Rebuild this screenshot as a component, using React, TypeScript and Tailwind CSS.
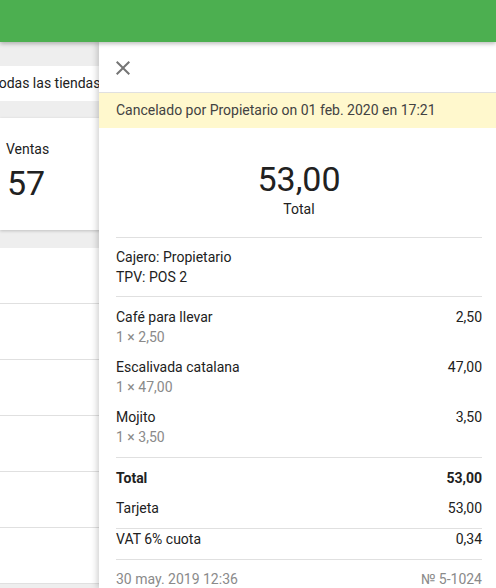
import React from "react";

function Row({ peek }: { peek?: boolean }) {
  return (
    <div className="h-[56px] border-b border-[#e0e0e0] flex items-center">
      {peek ? <span className="ml-[-8px] text-[14px] text-[#212121]">0</span> : null}
    </div>
  );
}

function Line({ left, right, sub, bold }: { left: string; right?: string; sub?: string; bold?: boolean }) {
  return (
    <div>
      <div className={"flex justify-between h-[20px] leading-[20px] text-[14px] " + (bold ? "font-bold text-[#212121]" : "text-[#212121]")}>
        <span>{left}</span>
        {right ? <span>{right}</span> : null}
      </div>
      {sub ? <div className="h-[20px] leading-[20px] text-[14px] text-[#8a8a8a]">{sub}</div> : null}
    </div>
  );
}

export default function App() {
  return (
    <div className="relative w-[496px] h-[588px] overflow-hidden bg-[#eeeeee] font-['Roboto',sans-serif]">
      <div className="relative z-10 h-[42px] bg-[#4caf50] shadow-[0_2px_4px_rgba(0,0,0,0.25)]" />
      <div className="flex flex-col">
        <div className="mt-[24px] h-[35px] bg-white flex items-center">
          <span className="ml-[-9px] text-[14px] text-[#212121] whitespace-nowrap">Todas las tiendas</span>
        </div>
        <div className="mt-[17px] h-[112px] bg-white shadow-[0_1px_3px_rgba(0,0,0,0.2)] pl-[6px] pt-[21px]">
          <div className="text-[14px] leading-[20px] text-[#212121]">Ventas</div>
          <div className="text-[34px] leading-[40px] text-[#212121] mt-[4px] ml-[1px]">57</div>
        </div>
        <div className="mt-[18px] bg-white">
          <Row />
          <Row />
          <Row peek />
          <Row peek />
          <Row peek />
          <Row peek />
        </div>
      </div>

      <div className="absolute left-[99px] top-[42px] right-0 bottom-0 bg-white shadow-[-2px_0_6px_rgba(0,0,0,0.18)] flex flex-col">
        <div className="h-[51px] border-b border-[#e0e0e0] flex items-start pt-[14px] pl-[12px]">
          <svg width="24" height="24" viewBox="0 0 24 24" fill="#757575">
            <path d="M19 6.41L17.59 5 12 10.59 6.41 5 5 6.41 10.59 12 5 17.59 6.41 19 12 13.41 17.59 19 19 17.59 13.41 12z" />
          </svg>
        </div>
        <div className="h-[35px] bg-[#fff8cd] flex items-center pl-[17px] text-[14px] text-[#424242]">
          Cancelado por Propietario on 01 feb. 2020 en 17:21
        </div>
        <div className="pl-[17px] pr-[14px]">
          <div className="pt-[31px] pb-[18px] border-b border-[#e0e0e0] flex flex-col items-center">
            <div className="text-[34px] leading-[40px] text-[#212121]">53,00</div>
            <div className="text-[14px] leading-[20px] text-[#212121]">Total</div>
          </div>
          <div className="py-[9px] border-b border-[#e0e0e0]">
            <Line left="Cajero: Propietario" />
            <Line left="TPV: POS 2" />
          </div>
          <div className="py-[10px] border-b border-[#e0e0e0] flex flex-col gap-[10px]">
            <Line left="Café para llevar" right="2,50" sub="1 × 2,50" />
            <Line left="Escalivada catalana" right="47,00" sub="1 × 47,00" />
            <Line left="Mojito" right="3,50" sub="1 × 3,50" />
          </div>
          <div className="py-[10px] border-b border-[#e0e0e0] flex flex-col gap-[10px]">
            <Line left="Total" right="53,00" bold />
            <Line left="Tarjeta" right="53,00" />
          </div>
          <div className="pb-[10px] border-b border-[#e0e0e0]">
            <Line left="VAT 6% cuota" right="0,34" />
          </div>
          <div className="pt-[9px] flex justify-between h-[20px] leading-[20px] text-[14px] text-[#8a8a8a]">
            <span>30 may. 2019 12:36</span>
            <span>№ 5-1024</span>
          </div>
        </div>
      </div>
    </div>
  );
}
